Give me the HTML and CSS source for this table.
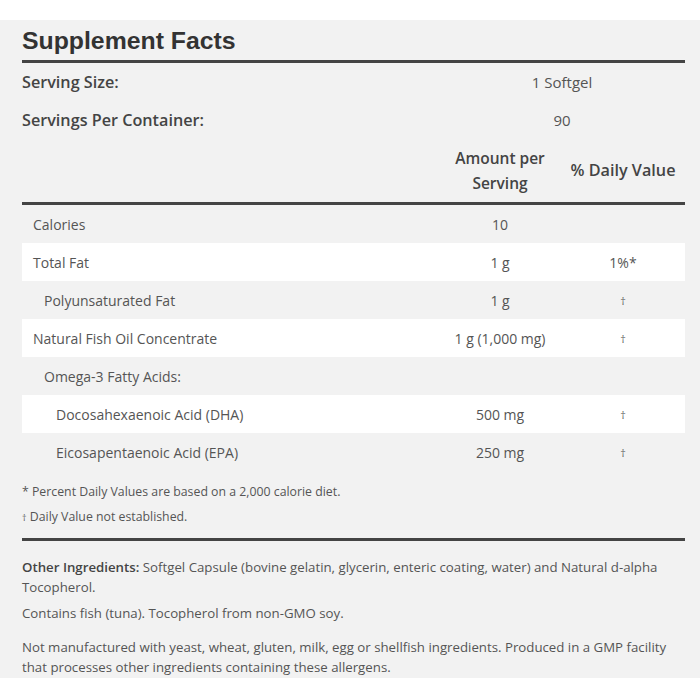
FILE: index.html
```html
<!DOCTYPE html>
<html>
<head>
<meta charset="utf-8">
<link rel="stylesheet" href="styles.css">
</head>
<body>
<div class="panel">
  <h1 class="title">Supplement Facts</h1>
  <div class="rule"></div>
  <div class="serv-row"><span class="serv-label">Serving Size:</span><span class="serv-val">1 Softgel</span></div>
  <div class="serv-row"><span class="serv-label">Servings Per Container:</span><span class="serv-val">90</span></div>
  <div class="head-row">
    <span></span>
    <span class="head-cell">Amount per<br>Serving</span>
    <span class="head-cell dvh">% Daily Value</span>
  </div>
  <div class="rule"></div>
  <div class="row grey"><span class="lbl i0">Calories</span><span class="amt">10</span><span class="dv"></span></div>
  <div class="row white"><span class="lbl i0">Total Fat</span><span class="amt">1 g</span><span class="dv">1%*</span></div>
  <div class="row grey"><span class="lbl i1">Polyunsaturated Fat</span><span class="amt">1 g</span><span class="dv dag">†</span></div>
  <div class="row white"><span class="lbl i0">Natural Fish Oil Concentrate</span><span class="amt">1 g (1,000 mg)</span><span class="dv dag">†</span></div>
  <div class="row grey"><span class="lbl i1">Omega-3 Fatty Acids:</span><span class="amt"></span><span class="dv"></span></div>
  <div class="row white"><span class="lbl i2">Docosahexaenoic Acid (DHA)</span><span class="amt">500 mg</span><span class="dv dag">†</span></div>
  <div class="row grey"><span class="lbl i2">Eicosapentaenoic Acid (EPA)</span><span class="amt">250 mg</span><span class="dv dag">†</span></div>
  <div class="notes">
    <p class="note">* Percent Daily Values are based on a 2,000 calorie diet.</p>
    <p class="note"><span class="sdag">†</span> Daily Value not established.</p>
  </div>
  <div class="rule"></div>
  <div class="other">
    <p class="p1"><strong>Other Ingredients:</strong> Softgel Capsule (bovine gelatin, glycerin, enteric coating, water) and Natural d-alpha Tocopherol.</p>
    <p class="p2">Contains fish (tuna). Tocopherol from non-GMO soy.</p>
    <p class="p3">Not manufactured with yeast, wheat, gluten, milk, egg or shellfish ingredients. Produced in a GMP facility that processes other ingredients containing these allergens.</p>
  </div>
</div>
</body>
</html>
```
FILE: styles.css
```css
* { box-sizing: border-box; }
html, body { margin: 0; padding: 0; background: #fff; }
body { padding-top: 20px; font-family: "Open Sans", Lato, sans-serif; color: #555; }
.panel {
  background: #f2f2f2;
  padding: 0 15px 2px 22px;
  height: 658px;
}
.title {
  margin: 0;
  font-family: "Liberation Sans", Arial, sans-serif;
  font-weight: bold;
  font-size: 24.8px;
  line-height: 28px;
  padding-top: 7px;
  height: 40px;
  color: #333;
}
.rule { height: 3px; background: #444; }
.serv-row {
  display: grid;
  grid-template-columns: 1fr 246px;
  height: 38px;
  align-items: center;
  font-size: 15px;
}
.serv-label { font-weight: 600; color: #444; font-size: 16.2px; }
.serv-val { text-align: center; color: #555; }
.head-row {
  display: grid;
  grid-template-columns: 1fr 122px 124px;
  height: 63px;
  align-items: center;
}
.head-cell {
  text-align: center;
  font-weight: 600;
  font-size: 15.5px;
  line-height: 25px;
  color: #444;
}
.head-cell.dvh { font-size: 16.2px; white-space: nowrap; }
.row {
  display: grid;
  grid-template-columns: 1fr 122px 124px;
  height: 38px;
  align-items: center;
  font-size: 14px;
}
.row.white { background: #fff; }
.lbl.i0 { padding-left: 11px; }
.lbl.i1 { padding-left: 22px; }
.lbl.i2 { padding-left: 34px; }
.amt, .dv { text-align: center; }
.dag { font-size: 11px; color: #666; }
.notes { padding: 8px 0 8px; }
.note { margin: 0; font-size: 12.3px; line-height: 25px; color: #555; }
.sdag { font-size: 9px; }
.other { padding-top: 16px; font-size: 13.25px; line-height: 20px; color: #555; }
.other p { margin: 0; }
.other strong { color: #444; font-weight: 600; }
.p2 { margin-top: 6px !important; }
.p3 { margin-top: 14px !important; }
```
